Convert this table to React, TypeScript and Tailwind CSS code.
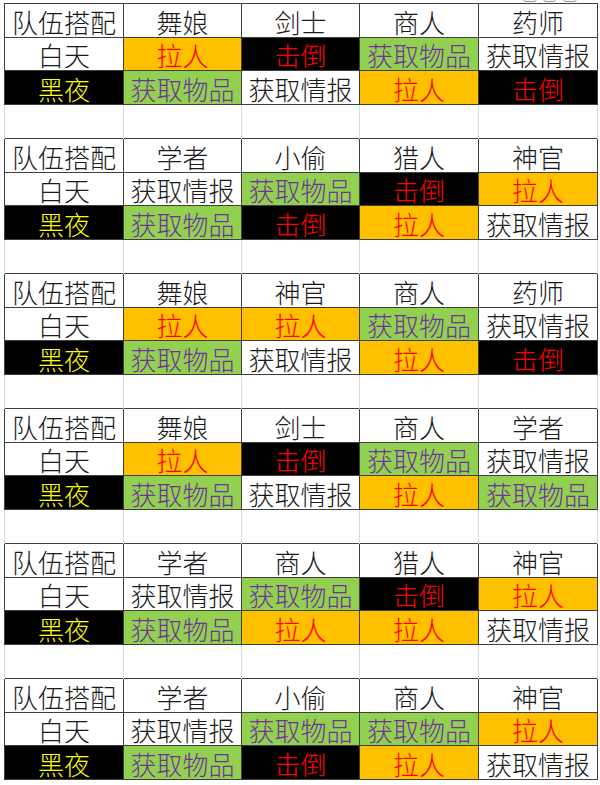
import React from "react";

type Blk = { h: string[]; d: string[]; n: string[] };

const blocks: Blk[] = [
  { h: ["舞娘", "剑士", "商人", "药师"], d: ["拉人", "击倒", "获取物品", "获取情报"], n: ["获取物品", "获取情报", "拉人", "击倒"] },
  { h: ["学者", "小偷", "猎人", "神官"], d: ["获取情报", "获取物品", "击倒", "拉人"], n: ["获取物品", "击倒", "拉人", "获取情报"] },
  { h: ["舞娘", "神官", "商人", "药师"], d: ["拉人", "拉人", "获取物品", "获取情报"], n: ["获取物品", "获取情报", "拉人", "击倒"] },
  { h: ["舞娘", "剑士", "商人", "学者"], d: ["拉人", "击倒", "获取物品", "获取情报"], n: ["获取物品", "获取情报", "拉人", "获取物品"] },
  { h: ["学者", "商人", "猎人", "神官"], d: ["获取情报", "获取物品", "击倒", "拉人"], n: ["获取物品", "拉人", "拉人", "获取情报"] },
  { h: ["学者", "小偷", "商人", "神官"], d: ["获取情报", "获取物品", "获取物品", "拉人"], n: ["获取物品", "击倒", "拉人", "获取情报"] },
];

const base = "border border-[#3f3f3f] p-0 pt-[2px] text-center whitespace-nowrap leading-[28px] align-middle";

function cls(v: string) {
  if (v === "拉人") return "bg-[#ffc000] text-[#ff0000]";
  if (v === "击倒") return "bg-black text-[#ff0000]";
  if (v === "获取物品") return "bg-[#92d050] text-[#7030a0]";
  return "bg-white text-[#1a1a1a]";
}

export default function App() {
  return (
    <div
      className="relative w-[600px] h-[785px] bg-white overflow-hidden"
      style={{ fontFamily: '"Noto Sans CJK SC", "Noto Sans", sans-serif' }}
    >
      <div className="absolute top-[-10px] left-[523px] w-[14px] h-[12px] rounded-[3px] border border-[#9a9a9a]" />
      <div className="absolute top-[-10px] left-[543px] w-[13px] h-[12px] rounded-[3px] border border-[#9a9a9a]" />
      <div className="absolute top-[-10px] left-[563px] w-[14px] h-[12px] rounded-[3px] border border-[#9a9a9a]" />
      <div className="pl-[4px] pt-[3px]">
        <table className="border-collapse table-fixed text-[26px] font-light">
          <colgroup>
            <col className="w-[119px]" />
            <col className="w-[118px]" />
            <col className="w-[118px]" />
            <col className="w-[119px]" />
            <col className="w-[119px]" />
          </colgroup>
          <tbody>
            {blocks.map((b, i) => (
              <React.Fragment key={i}>
                <tr className="h-[34px]">
                  <td className={`${base} bg-white text-[#1a1a1a]`}>队伍搭配</td>
                  {b.h.map((x, j) => (
                    <td key={j} className={`${base} bg-white text-[#1a1a1a]`}>{x}</td>
                  ))}
                </tr>
                <tr className="h-[33px]">
                  <td className={`${base} bg-white text-[#1a1a1a]`}>白天</td>
                  {b.d.map((x, j) => (
                    <td key={j} className={`${base} ${cls(x)}`}>{x}</td>
                  ))}
                </tr>
                <tr className="h-[34px]">
                  <td className={`${base} bg-black text-[#ffff00]`}>黑夜</td>
                  {b.n.map((x, j) => (
                    <td key={j} className={`${base} ${cls(x)}`}>{x}</td>
                  ))}
                </tr>
                {i < blocks.length - 1 && (
                  <tr className="h-[34px]">
                    {[0, 1, 2, 3, 4].map((j) => (
                      <td key={j} className="p-0 border-x border-x-[#d4d9e8] border-y-0" />
                    ))}
                  </tr>
                )}
              </React.Fragment>
            ))}
          </tbody>
        </table>
      </div>
    </div>
  );
}
